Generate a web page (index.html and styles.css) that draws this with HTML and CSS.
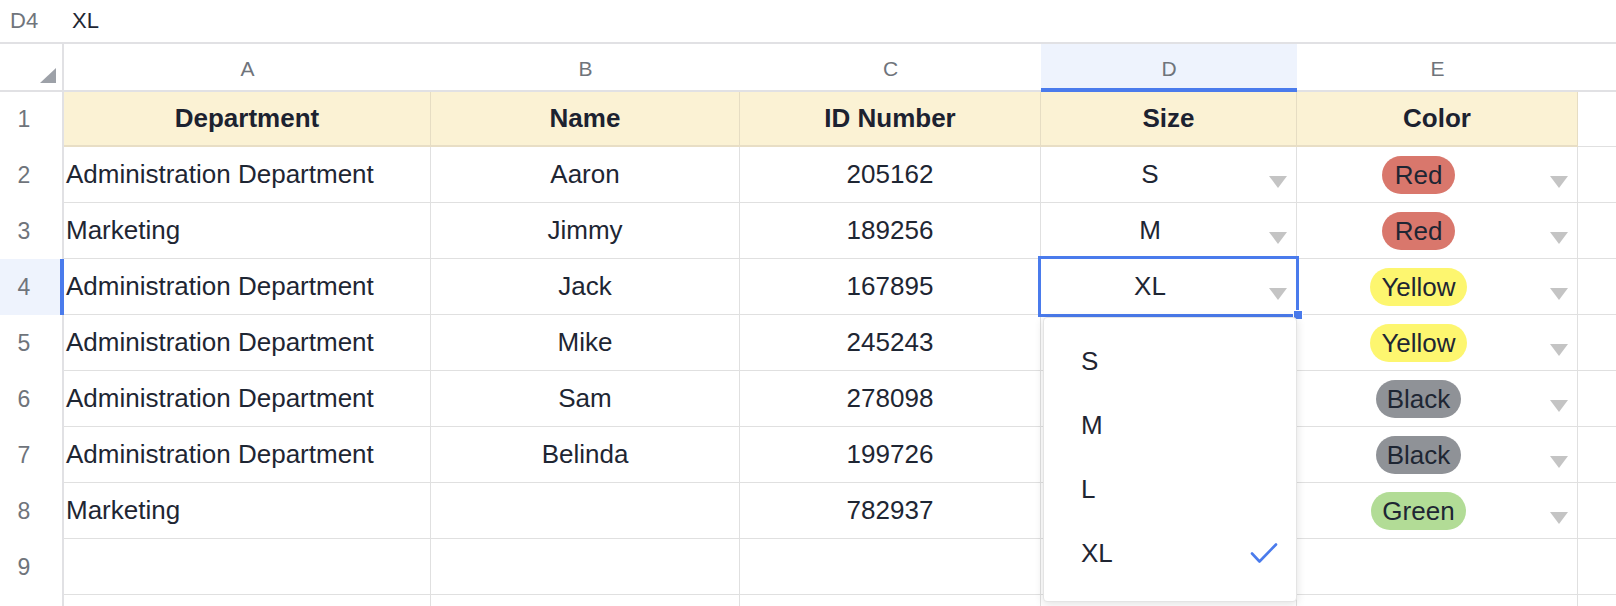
FILE: index.html
```html
<!DOCTYPE html>
<html lang="en">
<head>
    <meta charset="UTF-8">
    <meta name="viewport" content="width=device-width, initial-scale=1.0">
    <title>Staff Sizes</title>
    <link rel="stylesheet" href="styles.css">
</head>
<body>
    <div class="formula-bar">
        <span class="cell-ref">D4</span>
        <span class="cell-value">XL</span>
    </div>

    <div class="sheet">
        <div class="row col-heads">
            <div class="corner"><span class="corner-mark"></span></div>
            <div class="col-head">A</div>
            <div class="col-head">B</div>
            <div class="col-head">C</div>
            <div class="col-head active">D</div>
            <div class="col-head">E</div>
            <div class="col-head"></div>
        </div>

        <div class="row title-row">
            <div class="row-head">1</div>
            <div class="cell">Department</div>
            <div class="cell">Name</div>
            <div class="cell">ID Number</div>
            <div class="cell">Size</div>
            <div class="cell">Color</div>
            <div class="cell"></div>
        </div>

        <div class="row">
            <div class="row-head">2</div>
            <div class="cell">Administration Department</div>
            <div class="cell center">Aaron</div>
            <div class="cell center">205162</div>
            <div class="cell pick"><span class="value">S</span><span class="arrow"></span></div>
            <div class="cell pick"><span class="value"><span class="tag red">Red</span></span><span class="arrow"></span></div>
            <div class="cell"></div>
        </div>

        <div class="row">
            <div class="row-head">3</div>
            <div class="cell">Marketing</div>
            <div class="cell center">Jimmy</div>
            <div class="cell center">189256</div>
            <div class="cell pick"><span class="value">M</span><span class="arrow"></span></div>
            <div class="cell pick"><span class="value"><span class="tag red">Red</span></span><span class="arrow"></span></div>
            <div class="cell"></div>
        </div>

        <div class="row">
            <div class="row-head active">4</div>
            <div class="cell">Administration Department</div>
            <div class="cell center">Jack</div>
            <div class="cell center">167895</div>
            <div class="cell pick selected">
                <span class="value">XL</span><span class="arrow"></span>
                <span class="handle"></span>
                <div class="dropdown">
                    <div class="option">S</div>
                    <div class="option">M</div>
                    <div class="option">L</div>
                    <div class="option">XL
                        <svg class="check" width="28" height="22" viewBox="0 0 28 22">
                            <path d="M2 11.5 L9.5 19.5 L26 2.5" fill="none" stroke="#4a7bec" stroke-width="2.6" stroke-linecap="round" stroke-linejoin="round"/>
                        </svg>
                    </div>
                </div>
            </div>
            <div class="cell pick"><span class="value"><span class="tag yellow">Yellow</span></span><span class="arrow"></span></div>
            <div class="cell"></div>
        </div>

        <div class="row">
            <div class="row-head">5</div>
            <div class="cell">Administration Department</div>
            <div class="cell center">Mike</div>
            <div class="cell center">245243</div>
            <div class="cell pick"><span class="value"></span><span class="arrow"></span></div>
            <div class="cell pick"><span class="value"><span class="tag yellow">Yellow</span></span><span class="arrow"></span></div>
            <div class="cell"></div>
        </div>

        <div class="row">
            <div class="row-head">6</div>
            <div class="cell">Administration Department</div>
            <div class="cell center">Sam</div>
            <div class="cell center">278098</div>
            <div class="cell pick"><span class="value"></span><span class="arrow"></span></div>
            <div class="cell pick"><span class="value"><span class="tag black">Black</span></span><span class="arrow"></span></div>
            <div class="cell"></div>
        </div>

        <div class="row">
            <div class="row-head">7</div>
            <div class="cell">Administration Department</div>
            <div class="cell center">Belinda</div>
            <div class="cell center">199726</div>
            <div class="cell pick"><span class="value"></span><span class="arrow"></span></div>
            <div class="cell pick"><span class="value"><span class="tag black">Black</span></span><span class="arrow"></span></div>
            <div class="cell"></div>
        </div>

        <div class="row">
            <div class="row-head">8</div>
            <div class="cell">Marketing</div>
            <div class="cell center"></div>
            <div class="cell center">782937</div>
            <div class="cell pick"><span class="value"></span><span class="arrow"></span></div>
            <div class="cell pick"><span class="value"><span class="tag green">Green</span></span><span class="arrow"></span></div>
            <div class="cell"></div>
        </div>

        <div class="row">
            <div class="row-head">9</div>
            <div class="cell"></div>
            <div class="cell"></div>
            <div class="cell"></div>
            <div class="cell"></div>
            <div class="cell"></div>
            <div class="cell"></div>
        </div>

        <!-- next row peeks in under the fold -->
        <div class="row">
            <div class="row-head"></div>
            <div class="cell"></div>
            <div class="cell"></div>
            <div class="cell"></div>
            <div class="cell"></div>
            <div class="cell"></div>
            <div class="cell"></div>
        </div>
    </div>
</body>
</html>
```

FILE: styles.css
```css
* {
    box-sizing: border-box;
}
body {
    margin: 0;
    height: 606px;
    overflow: hidden;
    background-color: #ffffff;
    color: #1e2633;
    font-family: "Liberation Sans", Arial, sans-serif;
}

/* formula bar */
.formula-bar {
    display: flex;
    align-items: center;
    height: 44px;
    border-bottom: 2px solid #e1e1e4;
    font-size: 22px;
}
.cell-ref {
    width: 72px;
    padding-left: 10px;
    color: #70757c;
}

/* grid */
.row {
    display: grid;
    grid-template-columns: 64px 367px 309px 301px 256px 281px 1fr;
    height: 56px;
}
.col-heads {
    height: 48px;
}
.title-row {
    height: 55px;
}
.corner {
    display: flex;
    align-items: flex-end;
    justify-content: flex-end;
    padding: 0 6px 7px 0;
    border-right: 2px solid #e1e1e4;
    border-bottom: 2px solid #e1e1e4;
}
.corner-mark {
    width: 0;
    height: 0;
    border-left: 16px solid transparent;
    border-bottom: 15px solid #9da1a8;
}
.col-head {
    display: flex;
    align-items: center;
    justify-content: center;
    padding-top: 4px;
    border-bottom: 2px solid #e1e1e4;
    color: #6f747b;
    font-size: 21px;
}
.col-head.active {
    background-color: #eef3fd;
    border-bottom-color: #4a7bec;
    box-shadow: inset 0 -2px 0 #4a7bec;
}
.row-head {
    display: flex;
    align-items: center;
    justify-content: center;
    padding-right: 14px;
    border-right: 2px solid #e1e1e4;
    color: #6f747b;
    font-size: 23px;
}
.row-head.active {
    background-color: #eef3fd;
    border-right-color: #4a7bec;
    box-shadow: inset -2px 0 0 #4a7bec;
}
.cell {
    display: flex;
    align-items: center;
    padding-left: 2px;
    border-right: 1px solid #e0e0e0;
    border-bottom: 1px solid #e0e0e0;
    font-size: 26px;
    white-space: nowrap;
}
.cell:last-child {
    border-right: none;
}
.center {
    justify-content: center;
    padding-left: 0;
}
.title-row .cell {
    justify-content: center;
    padding-left: 0;
    background-color: #fbf2d4;
    border-right-color: #e6ddc3;
    border-bottom: 2px solid #e8dec5;
    color: #1c2230;
    font-weight: bold;
}
.title-row .cell:last-child {
    background-color: transparent;
    border-bottom: 1px solid #e0e0e0;
}

/* dropdown cells */
.pick {
    padding-left: 0;
}
.pick .value {
    flex: 1;
    text-align: center;
}
.arrow {
    align-self: flex-start;
    width: 0;
    height: 0;
    margin: 29px 9px 0 10px;
    border-left: 9px solid transparent;
    border-right: 9px solid transparent;
    border-top: 12px solid #c4c4c4;
}
.tag {
    display: inline-block;
    min-width: 73px;
    height: 38px;
    padding: 0 11px;
    border-radius: 19px;
    line-height: 38px;
    text-align: center;
}
.tag.red {
    background-color: #d9776c;
}
.tag.yellow {
    background-color: #fdf66f;
}
.tag.black {
    background-color: #8f9297;
}
.tag.green {
    background-color: #b2dc96;
}

/* active cell and its list */
.selected {
    position: relative;
    z-index: 2;
}
.selected::after {
    content: "";
    position: absolute;
    top: -3px;
    left: -3px;
    right: -3px;
    bottom: -3px;
    border: 3px solid #4a7bec;
    pointer-events: none;
}
.handle {
    position: absolute;
    right: -7px;
    bottom: -6px;
    width: 10px;
    height: 10px;
    background-color: #4a7bec;
    border: 1px solid #ffffff;
    z-index: 3;
}
.dropdown {
    position: absolute;
    top: calc(100% + 3px);
    left: 2px;
    width: 254px;
    padding: 11px 0 16px;
    background-color: #ffffff;
    border: 1px solid #e4e4e4;
    border-radius: 4px;
    box-shadow: 0 2px 10px rgba(0, 0, 0, 0.12);
    z-index: 4;
}
.option {
    display: flex;
    align-items: center;
    justify-content: space-between;
    height: 64px;
    padding: 0 18px 0 37px;
    color: #1f2532;
    font-size: 26px;
}
```
